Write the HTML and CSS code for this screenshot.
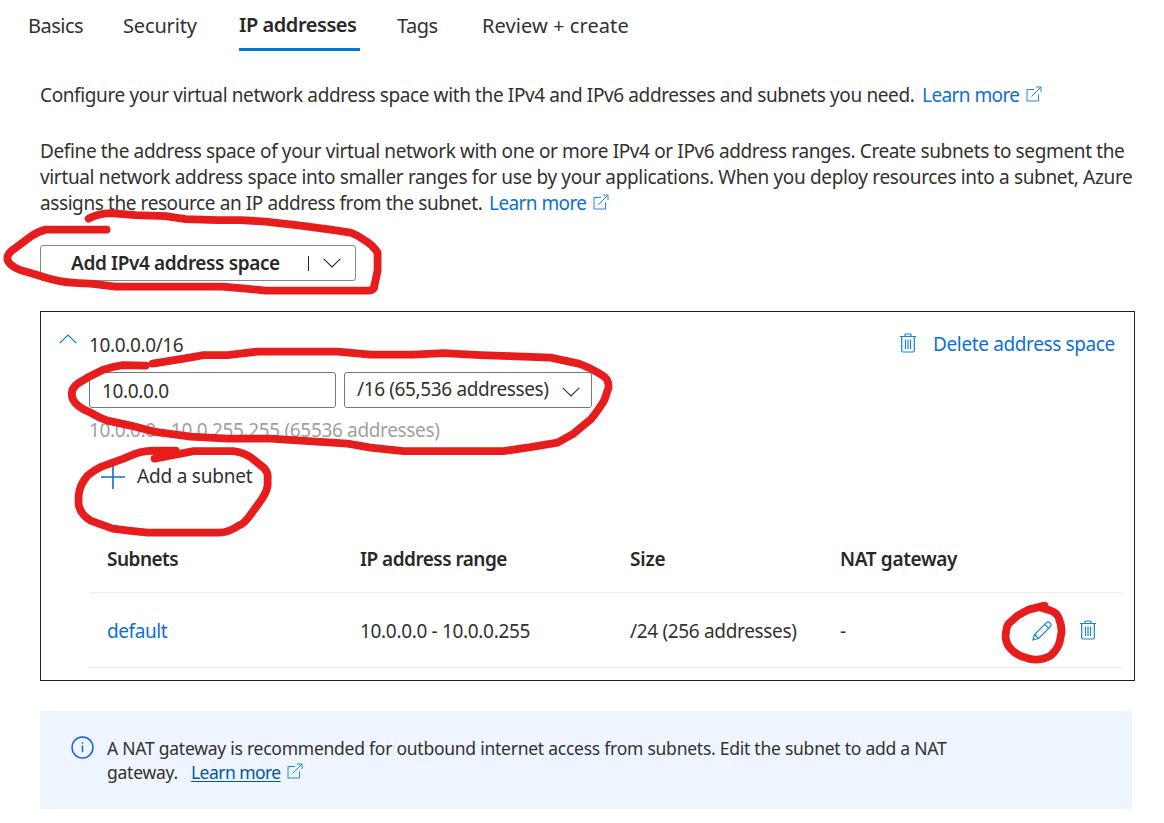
FILE: index.html
```html
<!DOCTYPE html>
<html lang="en">
<head>
<meta charset="utf-8">
<title>Create virtual network</title>
<link rel="stylesheet" href="styles.css">
</head>
<body>
<svg class="defs" width="0" height="0" aria-hidden="true">
  <symbol id="external" viewBox="0 0 16 16"><path d="M8 3.5H1V15H12.5V8.5M5.5 10.5L15 1M10 1H15V6"/></symbol>
  <symbol id="trash" viewBox="0 0 16 20"><path d="M0 3.5H16M5 3.5V1.5Q5 1 5.5 1H10.5Q11 1 11 1.5V3.5M1.7 3.5V17.5Q1.7 19 3 19H13Q14.3 19 14.3 17.5V3.5M5.5 6.5V16M8 6.5V16M10.5 6.5V16"/></symbol>
  <symbol id="chevron" viewBox="0 0 18 10"><path d="M.7 .8L9 9L17.3 .8"/></symbol>
</svg>
<nav class="tabs">
  <a class="tab basics">Basics</a>
  <a class="tab security">Security</a>
  <a class="tab active"><span>IP addresses</span></a>
  <a class="tab tags">Tags</a>
  <a class="tab review">Review + create</a>
</nav>
<main class="content">
  <p class="intro"><span class="t1">Configure your virtual network address space with the IPv4 and IPv6 addresses and subnets you need.</span><a class="link">Learn more</a><svg class="ext"><use href="#external"/></svg></p>
  <div class="details">
    <p class="t2">Define the address space of your virtual network with one or more IPv4 or IPv6 address ranges. Create subnets to segment the</p>
    <p class="t3">virtual network address space into smaller ranges for use by your applications. When you deploy resources into a subnet, Azure</p>
    <p class="row"><span class="t4">assigns the resource an IP address from the subnet.</span><a class="link">Learn more</a><svg class="ext"><use href="#external"/></svg></p>
  </div>
  <button class="add-space"><span class="add-label">Add IPv4 address space</span><i class="divider"></i><svg class="chev"><use href="#chevron"/></svg></button>

  <section class="panel">
    <header class="panel-head">
      <svg class="chev up blue"><use href="#chevron"/></svg>
      <span class="cidr">10.0.0.0/16</span>
      <svg class="trash"><use href="#trash"/></svg>
      <a class="delete">Delete address space</a>
    </header>
    <div class="fields">
      <div class="field address">10.0.0.0</div>
      <div class="field prefix"><span>/16 (65,536 addresses)</span><svg class="chev"><use href="#chevron"/></svg></div>
    </div>
    <div class="range">10.0.0.0 - 10.0.255.255 (65536 addresses)</div>
    <div class="add-subnet"><svg class="plus" viewBox="0 0 24 24"><path d="M0 12H24M12 0V24"/></svg><span>Add a subnet</span></div>
    <div class="table">
      <div class="tr th"><span>Subnets</span><span>IP address range</span><span class="size">Size</span><span class="nat">NAT gateway</span></div>
      <div class="tr td"><a class="link">default</a><span>10.0.0.0 - 10.0.0.255</span><span>/24 (256 addresses)</span><span>-</span>
        <svg class="pencil" viewBox="0 0 20 20"><path d="M1 19L2.5 13.5L14.2 1.8Q16 0 18 2Q20 4 18.2 5.8L6.5 17.5ZM2.5 13.5L6.5 17.5M12.7 3.3L16.7 7.3"/></svg>
        <svg class="trash"><use href="#trash"/></svg></div>
    </div>
  </section>

  <aside class="info">
    <svg class="info-icon" viewBox="0 0 24 24"><circle cx="12" cy="12" r="10.9"/><path d="M12 10V17M12 6.5V8.2"/></svg>
    <div class="info-text">
      <p class="n1">A NAT gateway is recommended for outbound internet access from subnets. Edit the subnet to add a NAT</p>
      <p class="row"><span class="n2">gateway.</span><a class="note-link">Learn more</a><svg class="ext"><use href="#external"/></svg></p>
    </div>
  </aside>
</main>
<svg class="ink" viewBox="0 0 1164 823">
  <g transform="translate(.6 .6)">
  <path d="M106 229H45Q37 231 30 236L14 248Q2 256 10 264Q16 269 25 271L48 278Q65 283 90 283L115 286H222L245 288L265 290H368Q374 290 374 284L377 270V252Q372 244 363 239Q356 234 350 232L330 229L300 225L265 221L240 219.500H217L185 218.500L165 215.500L135 214.500L110 212.500Q97 213 88 218"/>
  <path d="M145 365L122 364.500Q112 366 103 369L87 377L77 383Q69 389 72 398Q75 406 90 412Q98 417 107 420L130 425L153 431L190 436L227 438H270L300 440L347 443L370 447L403 450.500H503L530 446.500L557 442L573 433L590 419Q599 408 604 399Q606 393 608 387Q608 378 602 375Q590 367 578 363L550 357L510 355.500L480 354.500L443 352.500L413 354H370L337 351H257L227 354.500H203L183 358L152 363"/>
  <path d="M154 458L193 450.500H233Q245 452 253 459L263 467Q268 472 267 479V485Q266 493 258 503L250 514Q244 523 238 525Q228 532 218 532H147L128 530L112 528L90 520Q80 514 78 504V495Q79 484 87 475Q93 470 101 466L123 458L135 453Q144 450 155 450H175"/>
  <path d="M1044 605L1028 609L1017 615L1008 623Q1005 628 1005 637Q1006 644 1010 648Q1016 655 1025 657Q1037 662 1050 655Q1056 650 1059 642L1061 631Q1061 624 1058 617Q1056 612 1050 610L1040 607"/>
  </g>
</svg>
</body>
</html>
```
FILE: styles.css
```css
* { box-sizing: border-box; }
body { margin: 0; width: 1164px; height: 823px; overflow: hidden; background: #fff; color: #32312f; font: 19px/26px "Noto Sans", "Open Sans", sans-serif; letter-spacing: -.37px; white-space: nowrap; }
p { margin: 0; }
svg { display: block; flex: none; fill: none; stroke: currentColor; }
.defs { position: absolute; }
.tabs { display: flex; height: 51px; padding: 13px 0 0 28px; font-size: 20px; }
.tab { flex: none; }
.basics { width: 95px; letter-spacing: -.5px; }
.security { width: 116px; letter-spacing: -.15px; }
.active { width: 121px; margin-right: 37px; margin-top: -1px; border-bottom: 3px solid #0078d4; font-weight: 600; letter-spacing: -.45px; color: #292827; }
.tags { width: 85px; letter-spacing: -.5px; }
.review { letter-spacing: .08px; }
.content { padding-left: 40px; }
.intro, .row { display: flex; align-items: flex-start; }
.intro { margin-top: 31px; }
.details { margin-top: 30px; }
.t1 { width: 882px; letter-spacing: -.38px; }
.t3 { letter-spacing: -.34px; }
.t4 { width: 449px; letter-spacing: -.41px; }
.link { color: #0f6fcf; width: 104px; letter-spacing: -.58px; }
.ext { width: 16px; height: 16px; margin-top: 4px; color: #2088d8; }
.add-space { display: flex; align-items: center; width: 316px; height: 36px; margin-top: 29px; padding: 0 0 0 30px; background: #fff; border: 1px solid #888; border-radius: 3px; color: #292827; font: 600 19px/26px "Noto Sans", sans-serif; letter-spacing: -.37px; text-align: left; }
.add-label { width: 237px; }
.divider { width: 1px; height: 15px; margin-right: 14px; background: #292827; }
.chev { width: 18px; height: 10px; stroke-width: 1.1; }
.up { transform: scaleY(-1); }
.blue { color: #0078d4; }
.panel { width: 1095px; height: 370px; margin-top: 30px; border: 1px solid #222; }
.panel-head { display: flex; height: 60px; padding: 20px 0 0 18px; }
.panel-head .up { margin-top: 2px; }
.cidr { width: 811px; margin-left: 12px; }
.trash { width: 16px; height: 20px; color: #1683d8; stroke-width: 1.2; }
.panel-head .trash { margin-top: 1px; }
.delete { margin: -1px 0 0 17px; color: #0f6fcf; }
.fields { display: flex; gap: 8px; padding-left: 48px; }
.field { display: flex; align-items: center; height: 36px; border: 1px solid #777; border-radius: 3px; padding-left: 12px; }
.address { width: 247px; padding-top: 1px; }
.prefix { width: 248px; }
.prefix span { width: 205px; margin-top: -2px; }
.prefix .chev { margin-top: 4px; }
.range { padding: 9px 0 0 48px; color: #a19f9d; letter-spacing: -.34px; }
.add-subnet { display: flex; align-items: center; padding-left: 60px; margin-top: 21px; height: 26px; letter-spacing: -.2px; }
.add-subnet span { margin-top: -2px; }
.plus { width: 24px; height: 24px; color: #0f6fcf; stroke-width: 1.6; margin-right: 12px; }
.table { margin: 35px 0 0 48px; width: 1033px; }
.tr { display: grid; grid-template-columns: 253px 270px 210px 192px 48px 16px; align-items: center; padding-left: 18px; border-bottom: 1px solid #edebe9; }
.th { height: 68px; font-weight: 600; letter-spacing: -.53px; color: #292827; }
.size { letter-spacing: -.2px; }
.nat { letter-spacing: -.35px; }
.td { height: 75px; letter-spacing: -.33px; }
.td .link { letter-spacing: -.4px; }
.td a, .td span { padding-top: 2px; }
.pencil { width: 20px; height: 20px; margin-top: 2px; color: #1683d8; stroke-width: 1.2; }
.info { display: flex; width: 1092px; height: 98px; margin-top: 30px; padding: 25px 0 0 31px; background: #eff5ff; font-size: 17.5px; line-height: 24px; letter-spacing: -.25px; }
.info-icon { width: 23px; height: 23px; color: #155dde; stroke-width: 1.5; }
.info-text { margin-left: 13px; }
.n2 { width: 84px; }
.note-link { width: 90px; margin-right: 6px; color: #005a9e; text-decoration: underline; text-underline-offset: 2px; letter-spacing: -.55px; }
.info .ext { margin-top: 3px; }
.ink { position: absolute; left: 0; top: 0; width: 1164px; height: 823px; color: #e71c1c; stroke-width: 7.8; stroke-linecap: round; stroke-linejoin: round; pointer-events: none; }
```
